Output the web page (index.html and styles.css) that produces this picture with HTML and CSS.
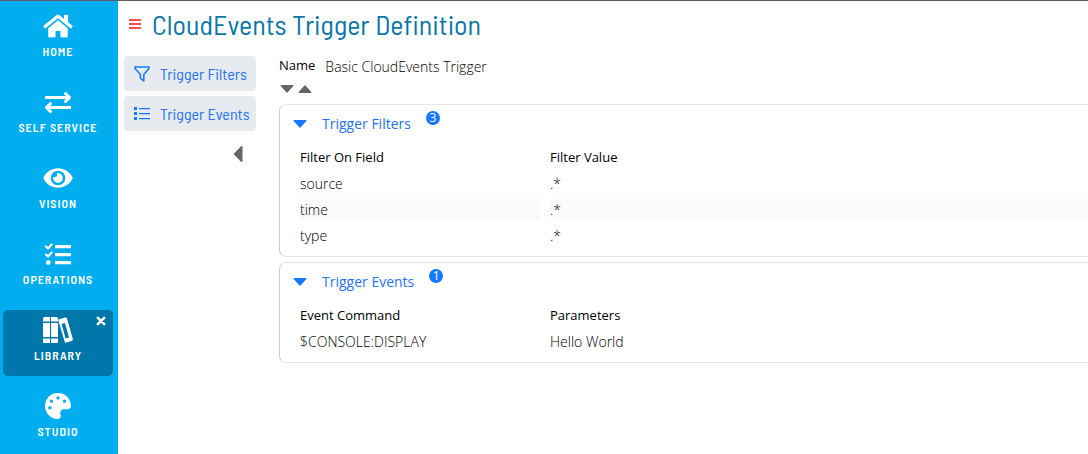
FILE: index.html
```html
<!DOCTYPE html>
<html lang="en">
<head>
<meta charset="utf-8">
<meta name="viewport" content="width=device-width, initial-scale=1">
<title>CloudEvents Trigger Definition</title>
<link rel="stylesheet" href="styles.css">
</head>
<body>
<div class="app">
  <nav class="sidebar" aria-label="Main">
    <a class="nav-item" href="#home">
      <svg class="nav-icon" viewBox="0 0 576 512"><path d="M280.37 148.26L96 300.11V464a16 16 0 0 0 16 16l112.06-.29a16 16 0 0 0 15.92-16V368a16 16 0 0 1 16-16h64a16 16 0 0 1 16 16v95.64a16 16 0 0 0 16 16.05L464 480a16 16 0 0 0 16-16V300L295.67 148.26a12.19 12.19 0 0 0-15.3 0zM571.6 251.47L488 182.56V44.05a12 12 0 0 0-12-12h-56a12 12 0 0 0-12 12v72.61L318.47 43a48 48 0 0 0-61 0L4.34 251.47a12 12 0 0 0-1.6 16.9l25.5 31A12 12 0 0 0 45.15 301l235.22-193.74a12.19 12.19 0 0 1 15.3 0L530.9 301a12 12 0 0 0 16.9-1.6l25.5-31a12 12 0 0 0-1.7-16.93z"/></svg>
      <span>HOME</span>
    </a>
    <a class="nav-item" href="#self-service">
      <svg class="nav-icon" viewBox="0 0 30 26"><g fill="none" stroke="#fff" stroke-width="3"><path d="M2 8.500H26M28 18.500H4"/><path d="M22.500 4.500L26.500 8.500L22.500 12.500M7.500 14.500L3.500 18.500L7.500 22.500" stroke-linecap="round" stroke-linejoin="round"/></g></svg>
      <span>SELF SERVICE</span>
    </a>
    <a class="nav-item" href="#vision">
      <svg class="nav-icon" viewBox="0 0 576 512"><path d="M572.52 241.4C518.29 135.59 410.93 64 288 64S57.68 135.64 3.48 241.41a32.35 32.35 0 0 0 0 29.19C57.71 376.41 165.07 448 288 448s230.32-71.64 284.52-177.41a32.35 32.35 0 0 0 0-29.19zM288 400a144 144 0 1 1 144-144 143.930 143.930 0 0 1-144 144zm0-240a95.310 95.310 0 0 0-25.310 3.790 47.850 47.850 0 0 1-66.900 66.900A95.780 95.780 0 1 0 288 160z"/></svg>
      <span>VISION</span>
    </a>
    <a class="nav-item" href="#operations">
      <svg class="nav-icon" viewBox="0 0 30 26"><path d="M12 4h16v3.200H12zM12 12h16v3.200H12zM12 20h16v3.200H12z"/><circle cx="5.200" cy="21.600" r="2.400"/><path d="M3 5.500L5 7.500L8.600 3.500M3 13.500L5 15.500L8.600 11.500" fill="none" stroke="#fff" stroke-width="2.200" stroke-linecap="round" stroke-linejoin="round"/></svg>
      <span>OPERATIONS</span>
    </a>
    <div class="nav-current">
      <a class="nav-item" href="#library" aria-current="page">
        <svg class="nav-icon" viewBox="0 0 30 26"><path d="M1.500 0H7V4.500H0V1.500Q0 0 1.500 0zM0 6H7V20H0zM0 21.500H7V26H1.500Q0 26 0 24.500zM8 0H13.500Q15 0 15 1.500V4.500H8zM8 6H15V20H8zM8 21.500H15V24.500Q15 26 13.500 26H8z"/><path fill-rule="evenodd" d="M15.500 2.500L22 .500Q23.500 0 24 1.500L29.800 22Q30.200 23.500 28.700 24L23.500 25.500Q22 26 21.600 24.500L15.500 4zM18.500 7L22.600 21.500L26 20.500L21.900 6z"/></svg>
        <span>LIBRARY</span>
      </a>
      <button class="nav-close" type="button" aria-label="Close Library"><svg viewBox="0 0 10 10"><path d="M1.800 1.800L8.200 8.200M8.200 1.800L1.800 8.200" stroke="#fff" stroke-width="2.500" stroke-linecap="round"/></svg></button>
    </div>
    <a class="nav-item" href="#studio">
      <svg class="nav-icon" viewBox="0 0 512 512"><path d="M204.3 5C104.9 24.4 24.8 104.3 5.2 203.4c-37 187 131.7 326.4 258.8 306.7 41.2-6.4 61.4-54.6 42.5-91.7-23.1-45.4 9.900-98.400 60.900-98.400h79.700c35.800 0 64.800-29.600 64.900-65.300C511.500 97.100 368.100-26.900 204.300 5zM96 320c-17.700 0-32-14.300-32-32s14.300-32 32-32 32 14.300 32 32-14.300 32-32 32zm32-128c-17.700 0-32-14.300-32-32s14.300-32 32-32 32 14.300 32 32-14.300 32-32 32zm128-64c-17.700 0-32-14.300-32-32s14.300-32 32-32 32 14.300 32 32-14.300 32-32 32zm128 64c-17.700 0-32-14.300-32-32s14.300-32 32-32 32 14.300 32 32-14.300 32-32 32z"/></svg>
      <span>STUDIO</span>
    </a>
  </nav>

  <div class="page">
    <header class="page-header">
      <button class="menu-button" type="button" aria-label="Menu"><svg viewBox="0 0 12 12"><path d="M0 1h12v2H0zM0 5h12v2H0zM0 9h12v2H0z" fill="#fb4d47"/></svg></button>
      <h1>CloudEvents Trigger Definition</h1>
    </header>

    <div class="body">
      <aside class="sections">
        <button class="section-button" type="button">
          <svg viewBox="0 0 16 16" fill="none" stroke="#1677ff" stroke-width="1.500" stroke-linejoin="round"><path d="M1 1H15V2.500L9.800 8.600V15L6.400 12.200V8.600L1 2.500z"/></svg>
          Trigger Filters
        </button>
        <button class="section-button" type="button">
          <svg viewBox="0 0 16 16" fill="#1677ff"><path d="M0 1h3v3H0zM0 6h3v3H0zM0 11h3v3H0zM5 2h11v1.300H5zM5 7h11v1.300H5zM5 12h11v1.300H5z"/></svg>
          Trigger Events
        </button>
        <button class="collapse" type="button" aria-label="Collapse sections"><svg viewBox="0 0 10 18"><path d="M9.500 1V17Q8 17 7 15.800L.5 9L7 2.200Q8 1 9.500 1z" fill="#666"/></svg></button>
      </aside>

      <main class="content">
        <dl class="field"><dt>Name</dt><dd>Basic CloudEvents Trigger</dd></dl>
        <div class="toggles">
          <button type="button" aria-label="Expand all"><svg viewBox="0 0 14 8"><path d="M.5 0H13.500Q13.500 1 12.500 2L7 8L1.500 2Q.5 1 .5 0z" fill="#666"/></svg></button>
          <button type="button" aria-label="Collapse all"><svg viewBox="0 0 14 8"><path d="M.5 8H13.500Q13.500 7 12.500 6L7 0L1.500 6Q.5 7 .5 8z" fill="#666"/></svg></button>
        </div>

        <section class="card">
          <button class="card-header" type="button" aria-expanded="true">
            <svg viewBox="0 0 14 8"><path d="M.5 0H13.500Q13.500 1 12.500 2L7 8L1.500 2Q.5 1 .5 0z" fill="#1677ff"/></svg>
            <span>Trigger Filters</span><span class="badge">3</span>
          </button>
          <table>
            <thead><tr><th scope="col" class="key">Filter On Field</th><th scope="col">Filter Value</th></tr></thead>
            <tbody>
              <tr><td>source</td><td>.*</td></tr>
              <tr><td>time</td><td>.*</td></tr>
              <tr><td>type</td><td>.*</td></tr>
            </tbody>
          </table>
        </section>

        <section class="card">
          <button class="card-header" type="button" aria-expanded="true">
            <svg viewBox="0 0 14 8"><path d="M.5 0H13.500Q13.500 1 12.500 2L7 8L1.500 2Q.5 1 .5 0z" fill="#1677ff"/></svg>
            <span>Trigger Events</span><span class="badge">1</span>
          </button>
          <table>
            <thead><tr><th scope="col" class="key">Event Command</th><th scope="col">Parameters</th></tr></thead>
            <tbody><tr><td>$CONSOLE:DISPLAY</td><td>Hello World</td></tr></tbody>
          </table>
        </section>
      </main>
    </div>
  </div>
</div>
</body>
</html>
```

FILE: styles.css
```css
* { box-sizing: border-box; }

:root {
  --condensed: "Barlow Semi Condensed", "Liberation Sans Narrow", Roboto, sans-serif;
  --blue: #1677ff;
  --link: #2673ec;
}

body {
  margin: 0;
  background: #fff;
  color: #000;
  font: 14px/20px "Open Sans", sans-serif;
}

button {
  margin: 0;
  padding: 0;
  border: 0;
  background: none;
  font: inherit;
  color: inherit;
  cursor: pointer;
}

svg { display: block; flex: none; }

.app {
  display: flex;
  min-height: 100vh;
  border-top: 1px solid #5c5c66;
}

.sidebar {
  flex: none;
  width: 118px;
  display: flex;
  flex-direction: column;
  gap: 10px;
  padding: 5px 5px 0 3px;
  background: #00adef;
}

.nav-item {
  display: flex;
  flex-direction: column;
  align-items: center;
  gap: 2px;
  height: 66px;
  padding-top: 7px;
  color: #fff;
  font: 600 12px/20px var(--condensed);
  letter-spacing: 1px;
  text-decoration: none;
}

.nav-icon { width: 30px; height: 26px; fill: #fff; }

.nav-current {
  position: relative;
  border-radius: 5px;
  background: #0077ab;
}

.nav-close { position: absolute; top: 6px; right: 7px; }
.nav-close svg { width: 10px; height: 10px; }

.page { flex: 1; min-width: 0; overflow: hidden; }

.page-header {
  display: flex;
  align-items: center;
  gap: 11px;
  padding: 5px 0 0 11px;
}

.menu-button svg { width: 12px; height: 12px; }

h1 {
  margin: 0;
  color: #0b76a8;
  font: 400 28px/36px var(--condensed);
}

.body { display: flex; gap: 23px; padding: 14px 0 0 6px; }

.sections {
  flex: none;
  width: 132px;
  display: flex;
  flex-direction: column;
  gap: 5px;
}

.section-button {
  display: flex;
  align-items: center;
  gap: 10px;
  height: 35px;
  padding-left: 10px;
  border-radius: 4px;
  background: #e7eaef;
  color: var(--link);
  font: 400 16px/20px var(--condensed);
  white-space: nowrap;
}

.section-button svg { width: 16px; height: 16px; }

.collapse { align-self: flex-end; margin: 9px 13px 0 0; }
.collapse svg { width: 10px; height: 18px; }

.content { flex: 1; min-width: 0; }

.field {
  display: flex;
  gap: 10px;
  margin: 0;
}

.field dt { font-size: 13px; line-height: 18px; }
.field dd { margin: 0; padding-top: 1px; font-weight: 300; }

.toggles { display: flex; gap: 4px; padding: 8px 1px 11px; }
.toggles svg { width: 14px; height: 8px; }

.card {
  margin-bottom: 5px;
  padding: 0 0 5px 10px;
  border: 1px solid #e6e6e6;
  border-left-color: #ccc;
  border-right: 0;
  border-radius: 7px 0 0 7px;
}

.card-header {
  display: flex;
  align-items: center;
  gap: 15px;
  height: 37px;
  padding-left: 3px;
  color: var(--link);
}

.card-header svg { width: 14px; height: 8px; }

.badge {
  width: 14px;
  height: 14px;
  margin-bottom: 12px;
  border-radius: 50%;
  background: var(--blue);
  color: #fff;
  font-size: 12px;
  line-height: 14px;
  text-align: center;
}

table {
  width: calc(100% + 10px);
  table-layout: fixed;
  border-spacing: 10px 5px;
}

th, td { height: 21px; padding: 0; line-height: 20px; text-align: left; }
th { font-size: 13px; font-weight: 400; vertical-align: top; }
td { font-weight: 300; }
.key { width: 240px; }
tbody tr:nth-child(even) td { background: #fafafa; }
```
